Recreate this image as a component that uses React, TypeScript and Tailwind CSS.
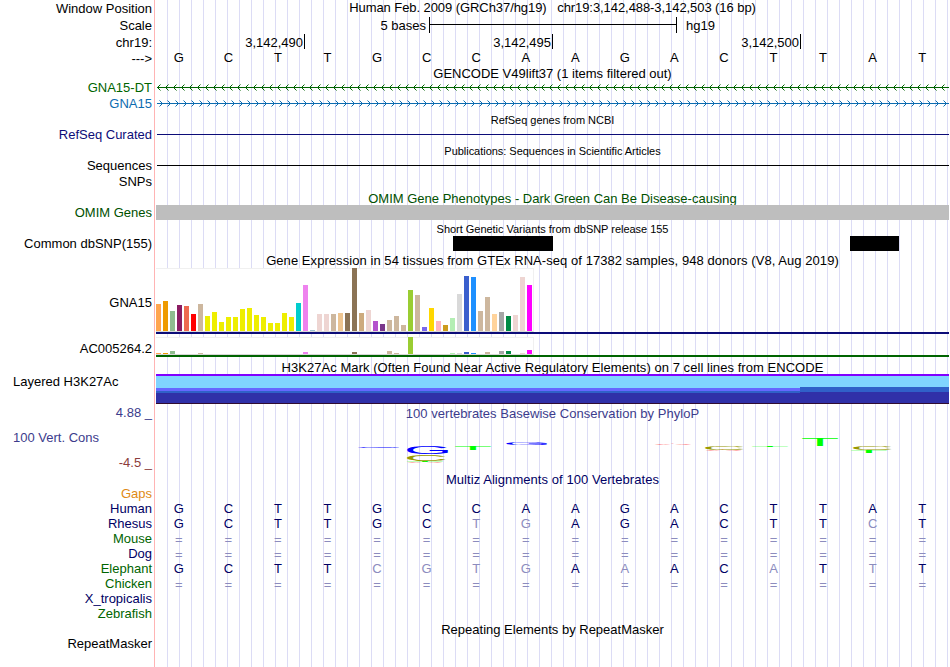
import type { ReactNode } from 'react';
import clsx from 'clsx';

const NAVY = 'text-[#000064]';
const GREEN = 'text-[#006400]';

// [height, colour] for every tissue, left to right
const TISSUES: [number, string][] = [
  [27, '#ffa54f'], [30, '#ee9a00'], [20, '#8fbc8f'], [26, '#8b1c62'], [25, '#ee6a50'], [17, '#ff0000'],
  [27, '#cdb79e'], [15, '#eeee00'], [19, '#eeee00'], [9, '#eeee00'], [14, '#eeee00'], [14, '#eeee00'],
  [22, '#eeee00'], [23, '#eeee00'], [16, '#eeee00'], [14, '#eeee00'], [8, '#eeee00'], [8, '#eeee00'],
  [18, '#eeee00'], [14, '#eeee00'], [28, '#00cdcd'], [46, '#ee82ee'], [1, '#9ac0cd'], [17, '#eed5d2'],
  [17, '#eed5d2'], [17, '#cdb79e'], [18, '#eec591'], [18, '#8b7355'], [63, '#8b7355'], [18, '#cdaa7d'],
  [21, '#eed5d2'], [10, '#b452cd'], [7, '#7a378b'], [11, '#cdb79e'], [15, '#cdb79e'], [6, '#cdb79e'],
  [41, '#9acd32'], [36, '#cdb79e'], [4, '#7a67ee'], [23, '#ffd700'], [10, '#ffb6c1'], [6, '#cd9b1d'],
  [13, '#b4eeb4'], [37, '#d9d9d9'], [55, '#3a5fcd'], [54, '#1e90ff'], [20, '#cdb79e'], [34, '#cdb79e'],
  [17, '#ffd39b'], [19, '#a6a6a6'], [15, '#008b45'], [16, '#eed5d2'], [54, '#eed5d2'], [46, '#ff00ff'],
];

const AC_HEIGHTS: Record<number, number> = {
  0: 1, 1: 1, 2: 3, 6: 1, 21: 2, 28: 2, 33: 3, 34: 1, 36: 17, 42: 1, 43: 1, 44: 2, 45: 1, 47: 2, 49: 3, 50: 3, 52: 1, 53: 4,
};

// lower case marks a base that differs from the human one
const ALIGNMENTS = [
  { name: 'Human', color: NAVY, bases: 'GCTTGCCAAGACTTAT' },
  { name: 'Rhesus', color: NAVY, bases: 'GCTTGCtgAGACTTcT' },
  { name: 'Mouse', color: GREEN, bases: '================' },
  { name: 'Dog', color: NAVY, bases: '================' },
  { name: 'Elephant', color: GREEN, bases: 'GCTTcgtgAaACaTtT' },
  { name: 'Chicken', color: GREEN, bases: '================' },
  { name: 'X_tropicalis', color: NAVY, bases: '' },
  { name: 'Zebrafish', color: GREEN, bases: '' },
];

type RowProps = { h: string; label?: ReactNode; color?: string; labelClass?: string; children?: ReactNode };

function Row({ h, label, color = 'text-black', labelClass, children }: RowProps) {
  return (
    <div className={clsx('flex shrink-0', h)}>
      <div className={clsx('flex w-[155px] shrink-0 items-center justify-end border-r border-[#ffb4b4] pr-0.5', color, labelClass)}>
        {label}
      </div>
      <div className="ml-px w-[793px] shrink-0 bg-[linear-gradient(to_right,transparent_11px,#dcdcf5_11px)] bg-[length:12px_100%]">
        {children}
      </div>
    </div>
  );
}

function Title({ h, color = 'text-black', small, className, children }: { h: string; color?: string; small?: boolean; className?: string; children: ReactNode }) {
  return (
    <Row h={h}>
      <div className={clsx('flex h-full items-center justify-center whitespace-pre', small ? 'text-[11px] tracking-[-0.03px]' : 'text-[13px]', color, className)}>
        {children}
      </div>
    </Row>
  );
}

function Bases({ bases, className }: { bases: string; className?: string }) {
  return (
    <div className={clsx('-ml-0.5 grid h-full w-[793px] grid-cols-16 items-center text-center', className)}>
      {bases.split('').map((b, i) => (
        <span key={i} className={clsx(b === '=' && 'pt-px leading-[13px] text-[#8c8cbe]', b >= 'a' && 'text-[#8c8cbe]')}>
          {b.toUpperCase()}
        </span>
      ))}
    </div>
  );
}

function Strand({ color, dir }: { color: string; dir: 'left' | 'right' }) {
  const arrows = Array.from({ length: 99 }, (_, i) =>
    dir === 'left' ? `M${i * 8 + 4.5} .5l-3 3l3 3` : `M${i * 8 + 3.5} .5l3 3l-3 3`
  );
  return (
    <svg width="793" height="7" className="block">
      <path d="M1 3.5H793" stroke={color} />
      <path d={arrows.join('')} stroke={color} fill="none" />
    </svg>
  );
}

function Expression({ heights, line }: { heights: number[]; line: string }) {
  return (
    <div className="flex h-full flex-col">
      <div className="flex w-[378px] flex-1 items-end gap-[2px] border-t border-r border-b border-t-[#f0f0f0] border-r-[#f0f0f0] border-b-[#d8d8d8] bg-white">
        {heights.map((height, i) => (
          <div key={i} className="w-[5px] shrink-0" style={{ height, marginTop: -1, background: TISSUES[i][1] }} />
        ))}
      </div>
      <div className={clsx('h-0.5', line)} />
    </div>
  );
}

// left edge, width and height of each letter's ink at font size 100
const INK: Record<string, [number, number, number]> = {
  A: [0, 67, 69],
  C: [5, 64, 71],
  G: [5, 66, 71],
  T: [2, 57, 69],
};

const LOGO = [
  { ch: 'G', x: 202, y: 42.5, w: 41, h: 1.4, fill: '#0000ff' },
  { ch: 'G', x: 251, y: 42, w: 41, h: 7.6, fill: '#0000ff' },
  { ch: 'C', x: 251, y: 50, w: 39, h: 7, fill: '#999900' },
  { ch: 'T', x: 251, y: 57, w: 36, h: 1, fill: '#00ff00' },
  { ch: 'A', x: 251, y: 58, w: 36, h: 0.8, fill: '#ff0000' },
  { ch: 'T', x: 299, y: 42, w: 36, h: 4, fill: '#00ff00' },
  { ch: 'G', x: 350, y: 38, w: 41, h: 2.6, fill: '#0000ff' },
  { ch: 'A', x: 498, y: 39.3, w: 38, h: 1.3, fill: '#ff0000' },
  { ch: 'C', x: 549, y: 42, w: 39, h: 4, fill: '#999900' },
  { ch: 'A', x: 549, y: 46, w: 37, h: 0.8, fill: '#ff0000' },
  { ch: 'T', x: 596, y: 42, w: 36, h: 1, fill: '#00ff00' },
  { ch: 'T', x: 646, y: 34, w: 36, h: 8, fill: '#00ff00' },
  { ch: 'C', x: 697, y: 42, w: 39, h: 4, fill: '#999900' },
  { ch: 'T', x: 695, y: 46, w: 36, h: 3, fill: '#00ff00' },
];

function ConservationLogo() {
  return (
    <svg width="793" height="68" className="block" fontSize="100">
      {LOGO.map(({ ch, x, y, w, h, fill }, i) => {
        const [left, width, height] = INK[ch];
        const sx = w / width;
        return (
          <text key={i} fill={fill} transform={`translate(${x - left * sx} ${y + h}) scale(${sx} ${h / height})`}>
            {ch}
          </text>
        );
      })}
    </svg>
  );
}

export default function App() {
  return (
    <div className="flex h-[667px] w-[950px] flex-col overflow-hidden bg-white font-['Liberation_Sans',Arial,sans-serif] text-[13px] leading-[15px] text-black">
      {/* Position and ruler */}
      <Row h="h-4" label="Window Position">
        <div className="flex h-[15px] items-center justify-center tracking-[-0.07px] whitespace-pre">
          {'Human Feb. 2009 (GRCh37/hg19)   chr19:3,142,488-3,142,503 (16 bp)'}
        </div>
      </Row>
      <Row h="h-[18px]" label="Scale">
        <div className="flex h-full items-center">
          <span className="w-[270px] text-right">5 bases</span>
          <div className="ml-[3px] flex h-4 w-[248px] items-start border-x border-black pt-[7px]">
            <div className="h-px w-full bg-black" />
          </div>
          <span className="ml-[9px]">hg19</span>
        </div>
      </Row>
      <Row h="h-4" label="chr19:">
        <div className="flex h-full items-start">
          <div className="flex h-[15px] w-[149px] items-center justify-end border-r border-black pt-px pr-px">3,142,490</div>
          <div className="flex h-[15px] w-[248px] items-center justify-end border-r border-black pt-px pr-px">3,142,495</div>
          <div className="flex h-[15px] w-[248px] items-center justify-end border-r border-black pt-px pr-px">3,142,500</div>
        </div>
      </Row>
      <Row h="h-[15px]" label="--->" labelClass="pt-0.5">
        <Bases bases="GCTTGCCAAGACTTAT" className="pb-0.5" />
      </Row>

      {/* Genes */}
      <Title h="h-[15px]" className="pt-px">GENCODE V49lift37 (1 items filtered out)</Title>
      <Row h="h-[15px]" label="GNA15-DT" color={GREEN}>
        <div className="pt-1"><Strand color="#006400" dir="left" /></div>
      </Row>
      <Row h="h-4" label="GNA15" color="text-[#0c6cb0]">
        <div className="pt-[5px]"><Strand color="#0c6cb0" dir="right" /></div>
      </Row>
      <Title h="h-4" small className="pt-0.5">RefSeq genes from NCBI</Title>
      <Row h="h-[15px]" label="RefSeq Curated" color="text-[#0c0c78]">
        <div className="flex h-full items-center pl-px"><div className="h-px w-full bg-[#0c0c78]" /></div>
      </Row>
      <Title h="h-4" small className="pt-0.5">Publications: Sequences in Scientific Articles</Title>
      <Row h="h-[15px]" label="Sequences">
        <div className="flex h-full items-center pl-px"><div className="h-px w-full bg-black" /></div>
      </Row>
      <Row h="h-[17px]" label="SNPs" />

      {/* Variants */}
      <Title h="h-[15px]" color="text-[#005000]" className="pt-0.5">OMIM Gene Phenotypes - Dark Green Can Be Disease-causing</Title>
      <Row h="h-[15px]" label="OMIM Genes" color="text-[#005000]">
        <div className="h-full bg-[#bebebe]" />
      </Row>
      <Title h="h-4" small className="pt-0.5">Short Genetic Variants from dbSNP release 155</Title>
      <Row h="h-[15px]" label="Common dbSNP(155)">
        <div className="flex h-full pl-[297px]">
          <div className="w-[100px] bg-black" />
          <div className="ml-[297px] w-[49px] bg-black" />
        </div>
      </Row>

      {/* GTEx */}
      <Title h="h-[17px]" className="pt-0.5 tracking-[0.06px]">Gene Expression in 54 tissues from GTEx RNA-seq of 17382 samples, 948 donors (V8, Aug 2019)</Title>
      <Row h="h-[66px]" label="GNA15" labelClass="pt-0.5">
        <Expression heights={TISSUES.map(([height]) => height)} line="bg-[#0c0c78]" />
      </Row>
      <Row h="h-[3px]" />
      <Row h="h-5" label="AC005264.2" labelClass="pt-0.5">
        <Expression heights={TISSUES.map((_, i) => AC_HEIGHTS[i] ?? 0)} line="bg-[#006400]" />
      </Row>

      {/* Histone marks */}
      <Title h="h-[17px]" className="pt-1 tracking-[0.05px]">H3K27Ac Mark (Often Found Near Active Regulatory Elements) on 7 cell lines from ENCODE</Title>
      <Row h="h-[30px]" label="Layered H3K27Ac" labelClass="justify-start! items-start! pl-[13px]">
        <div className="flex h-full flex-col bg-[#3030a8]">
          <div className="h-0.5 bg-[#8000ff]" />
          <div className="flex flex-1">
            <div className="flex w-[644px] flex-col">
              <div className="h-3 bg-[#80d4ff]" />
              <div className="h-[3px] bg-[#6666ff]" />
              <div className="h-0.5 bg-[#3060c8]" />
            </div>
            <div className="flex flex-1 flex-col">
              <div className="h-[11px] bg-[#80d4ff]" />
              <div className="h-[5px] bg-[#3060c8]" />
            </div>
          </div>
          <div className="h-px bg-[#300c30]" />
        </div>
      </Row>

      {/* Conservation */}
      <Row
        h="h-[68px]"
        label={
          <div className="flex h-full w-full flex-col text-right text-[#3c3c8c]">
            <span className="pt-px">4.88 _</span>
            <span className="pt-[10px] pl-[13px] text-left">100 Vert. Cons</span>
            <span className="pt-[10px] text-[#8c3c3c]">-4.5 _</span>
          </div>
        }
      >
        <div className="relative text-center text-[#3c3c8c]">
          <div className="pt-0.5 tracking-[0.03px]">100 vertebrates Basewise Conservation by PhyloP</div>
          <div className="absolute inset-0"><ConservationLogo /></div>
        </div>
      </Row>

      <Title h="h-[14px]" color={NAVY} className="tracking-[0.06px]">Multiz Alignments of 100 Vertebrates</Title>
      <Row h="h-[15px]" label="Gaps" color="text-[#e08a14]" />
      {ALIGNMENTS.map((row) => (
        <Row key={row.name} h="h-[15px]" label={row.name} color={row.color}>
          <Bases bases={row.bases} className={NAVY} />
        </Row>
      ))}

      <Title h="h-[15px]" className="pt-0.5">Repeating Elements by RepeatMasker</Title>
      <Row h="h-[15px]" label="RepeatMasker" />
      <Row h="h-4" />
    </div>
  );
}
